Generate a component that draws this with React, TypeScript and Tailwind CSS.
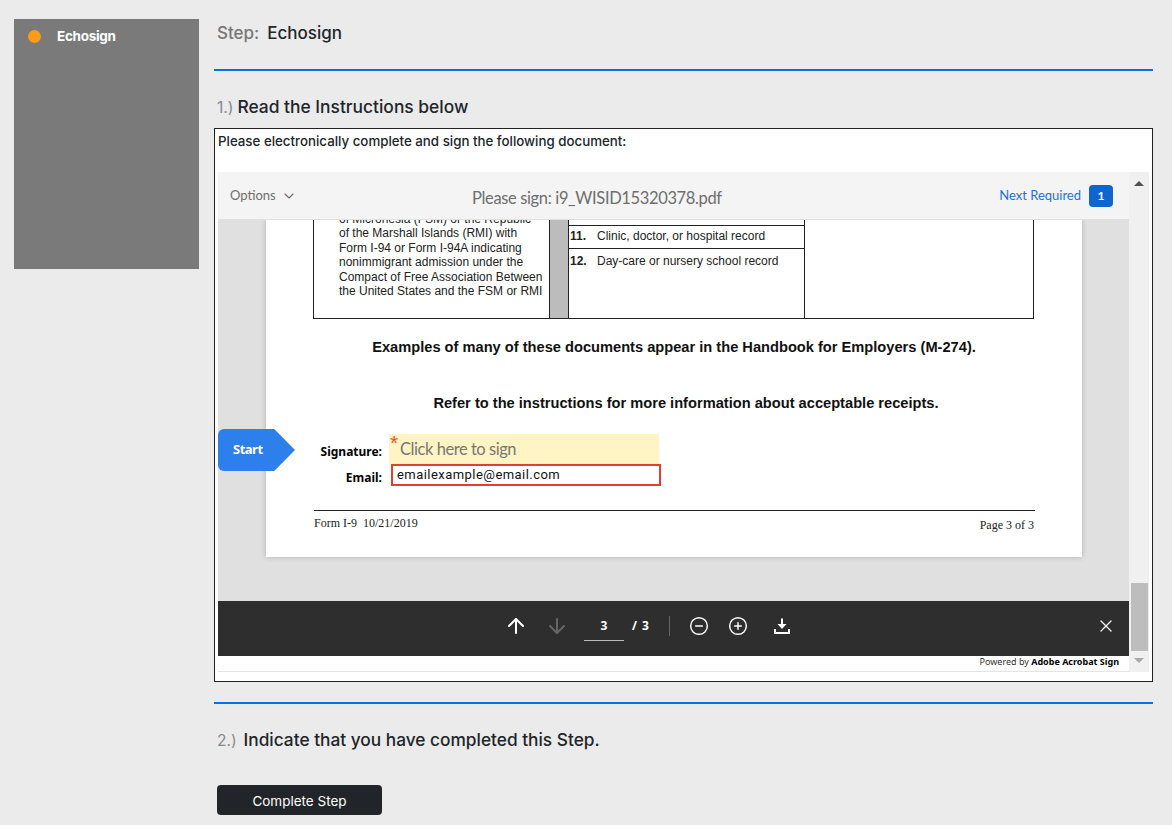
import React from 'react';
import { ArrowUp, ArrowDown, ChevronDown, CircleMinus, CirclePlus, X } from 'lucide-react';

const karla = 'font-["Inter","Open_Sans",sans-serif]';
const adobe = 'font-["Lato","Open_Sans",sans-serif]';
const noto = 'font-["Noto_Sans","Open_Sans",sans-serif]';

const DownloadIcon = () => (
    <svg width="18" height="18" viewBox="0 0 18 18" fill="none" className="text-white">
        <path d="M9 1.5V10" stroke="currentColor" strokeWidth="2" />
        <path d="M4.5 7H13.5L9 12Z" fill="currentColor" />
        <path d="M2 12V16H16V12" stroke="currentColor" strokeWidth="2" />
    </svg>
);

const ViewerHeader = () => (
    <div className={`flex items-center h-[48px] shrink-0 bg-[#f4f4f4] border-b border-[#e0e0e0] pl-3 pr-4 ${adobe}`}>
        <div className="flex items-center gap-[5px] w-[242px] text-[13px] text-[#6e6e6e]">
            Options <ChevronDown size={16} strokeWidth={1.75} />
        </div>
        <div className="text-[16.5px] tracking-[-0.36px] text-[#6e6e6e] flex-1 pt-[5px]">Please sign: i9_WISID15320378.pdf</div>
        <div className="text-[13px] text-[#1473e6] mr-2">Next Required</div>
        <div className="w-6 h-[22px] rounded-sm bg-[#0d66d0] text-white text-[12px] font-bold flex items-center justify-center">1</div>
    </div>
);

const DocTable = () => (
    <div className="flex h-[99px] mx-[47px] w-[721px] border border-t-0 border-[#222] font-['Liberation_Sans',sans-serif] text-[12px] text-[#222] leading-[14.4px]">
        <div className="w-[235px] pl-[25px] -mt-[8px] shrink-0">
            <div>of Micronesia (FSM) or the Republic</div>
            <div>of the Marshall Islands (RMI) with</div>
            <div>Form I-94 or Form I-94A indicating</div>
            <div>nonimmigrant admission under the</div>
            <div>Compact of Free Association Between</div>
            <div>the United States and the FSM or RMI</div>
        </div>
        <div className="w-[20px] shrink-0 bg-[#bcbcbc] border-x border-[#222]"></div>
        <div className="w-[236px] shrink-0 border-r border-[#222]">
            <div className="h-[6px] border-b border-[#222]"></div>
            <div className="h-[23px] border-b border-[#222] flex items-center pl-[1px] pb-[2px]"><b className="w-[27px]">11.</b>Clinic, doctor, or hospital record</div>
            <div className="h-[24px] flex items-center pl-[1px]"><b className="w-[27px]">12.</b>Day-care or nursery school record</div>
        </div>
    </div>
);

const DocPage = () => (
    <div className="relative w-[816px] ml-[48px] h-[337px] bg-white shadow-[0_0_6px_rgba(0,0,0,0.2)]">
        <DocTable />
        <div className="text-center font-['Liberation_Sans',sans-serif] font-bold text-[14.65px] text-[#111] mt-[19px] leading-[18px]">Examples of many of these documents appear in the Handbook for Employers (M-274).</div>
        <div className="text-center font-['Liberation_Sans',sans-serif] font-bold text-[14.65px] text-[#111] mt-[38px] leading-[18px] pl-[24px]">Refer to the instructions for more information about acceptable receipts.</div>
        <div className="flex mt-[22px]">
            <div className={`w-[116px] text-right text-[12px] font-bold text-black pt-[10px] leading-[16px] ${noto}`}>
                <div>Signature:</div>
                <div className="mt-[10px]">Email:</div>
            </div>
            <div className="ml-[7px]">
                <div className={`relative w-[270px] h-[30px] bg-[#fff5c4] pl-[11px] text-[16.5px] tracking-[-0.45px] leading-[31px] text-[#777] ${adobe}`}>
                    Click here to sign
                    <span className="absolute left-[1px] top-[-2px] text-[21px] leading-[21px] text-[#f0541e] font-['Liberation_Sans',sans-serif]">*</span>
                </div>
                <div className="w-[270px] h-[22px] ml-[2px] border-2 border-[#e0402f] pl-[4px] font-['Roboto',sans-serif] text-[13px] leading-[17px] tracking-[0.45px] text-[#111]">emailexample@email.com</div>
            </div>
        </div>
        <div className="ml-[48px] mt-[24px] border-t border-[#222] w-[721px] flex justify-between pt-[3px] pr-[1px] font-['Liberation_Serif',serif] text-[12px] text-[#222] leading-[18px]">
            <span>Form I-9&nbsp;&nbsp;10/21/2019</span>
            <span className="pt-[2px]">Page 3 of 3</span>
        </div>
    </div>
);

const ViewerToolbar = () => (
    <div className="flex items-center h-[55px] shrink-0 bg-[#2e2e2e] text-white pl-[286px] pr-[13px] pb-[5px]">
        <ArrowUp size={24} strokeWidth={2} />
        <ArrowDown size={24} strokeWidth={2} className="ml-[17px] text-[#666]" />
        <div className={`ml-[15px] w-[40px] h-[29px] border-b border-[#bbb] text-center text-[12px] font-bold leading-[28px] ${noto}`}>3</div>
        <div className={`ml-[8px] text-[12px] font-bold tracking-[1px] ${noto}`}>/ 3</div>
        <div className="ml-[19px] w-px h-5 bg-[#666]"></div>
        <CircleMinus size={20} strokeWidth={1.75} className="ml-[19px]" />
        <CirclePlus size={20} strokeWidth={1.75} className="ml-[19px]" />
        <div className="ml-[25px] flex"><DownloadIcon /></div>
        <X size={20} strokeWidth={1.5} className="ml-auto" />
    </div>
);

const Scrollbar = () => (
    <div className="w-[20px] shrink-0 bg-[#f0f0f0] flex flex-col items-center">
        <div className="mt-[9px] w-0 h-0 border-x-[5px] border-x-transparent border-b-[5px] border-b-[#505050]"></div>
        <div className="flex-1"></div>
        <div className="w-[17px] h-[68px] bg-[#bdbdbd]"></div>
        <div className="mt-[7px] mb-[9px] w-0 h-0 border-x-[5px] border-x-transparent border-t-[5px] border-t-[#a8a8a8]"></div>
    </div>
);

const Viewer = () => (
    <div className="flex h-[500px] ml-[3px] mr-[3px]">
        <div className="relative flex flex-col w-[911px] border-b border-[#e4e4e4]">
            <ViewerHeader />
            <div className="relative flex-1 bg-[#e0e0e0] overflow-hidden">
                <DocPage />
                <div className="absolute left-0 top-[209px] w-[77px] h-[42px] bg-[#2d80ec] rounded-l-md [clip-path:polygon(0_0,73%_0,100%_50%,73%_100%,0_100%)] pl-[15px] flex items-center text-white text-[13px] font-bold tracking-[-0.5px] font-['Noto_Sans',sans-serif]">Start</div>
            </div>
            <ViewerToolbar />
            <div className={`h-[15px] bg-white flex justify-end pr-[10px] text-[9px] leading-[11px] text-[#333] ${noto}`}>
                <span>Powered by&nbsp;<b className="text-black">Adobe Acrobat Sign</b></span>
            </div>
        </div>
        <Scrollbar />
    </div>
);

export default function App() {
    return (
        <div className={`flex items-start h-[825px] overflow-hidden bg-[#ebebeb] pl-[14px] pt-[19px] ${karla}`}>
            <div className="w-[185px] h-[250px] shrink-0 bg-[#7a7a7a] pl-[14px] pt-[8px]">
                <div className="flex items-center gap-[16px] text-white text-[13.5px] font-bold tracking-[-0.3px] leading-[18px]">
                    <span className="w-[13px] h-[13px] rounded-full bg-[#f99c17]"></span>
                    Echosign
                </div>
            </div>
            <div className="w-[939px] ml-[15px] -mt-[19px]">
                <div className="h-[71px] border-b-2 border-[#0a6ee8] pl-[3px] pt-[21px] text-[17px] leading-[24px] font-medium">
                    <span className="text-[#777] mr-[8px]">Step:</span><span className="text-[#212529]">Echosign</span>
                </div>
                <div className="mt-[24px] h-[22px] pl-[3px] text-[17.4px] leading-[24px] font-medium text-[#212529]">
                    <span className="text-[15.5px] text-[#7d8a99] font-normal mr-[4px]">1.)</span>Read the Instructions below
                </div>
                <div className="mt-[11px] h-[554px] border border-[#222] bg-white">
                    <div className="h-[43px] pl-[3px] pt-[3px] text-[13.3px] font-medium leading-[18px] text-[#212529]">Please electronically complete and sign the following document:</div>
                    <Viewer />
                </div>
                <div className="mt-[20px] border-t-2 border-[#0a6ee8]"></div>
                <div className="mt-[24px] h-[22px] pl-[3px] text-[17.3px] leading-[24px] font-medium text-[#212529]">
                    <span className="text-[15.5px] text-[#8a8a8a] font-normal mr-[7px]">2.)</span>Indicate that you have completed this Step.
                </div>
                <button className="block mt-[35px] ml-[3px] w-[165px] h-[30px] pt-[3px] rounded bg-[#212529] text-white text-[13.5px]">Complete Step</button>
            </div>
        </div>
    );
}
